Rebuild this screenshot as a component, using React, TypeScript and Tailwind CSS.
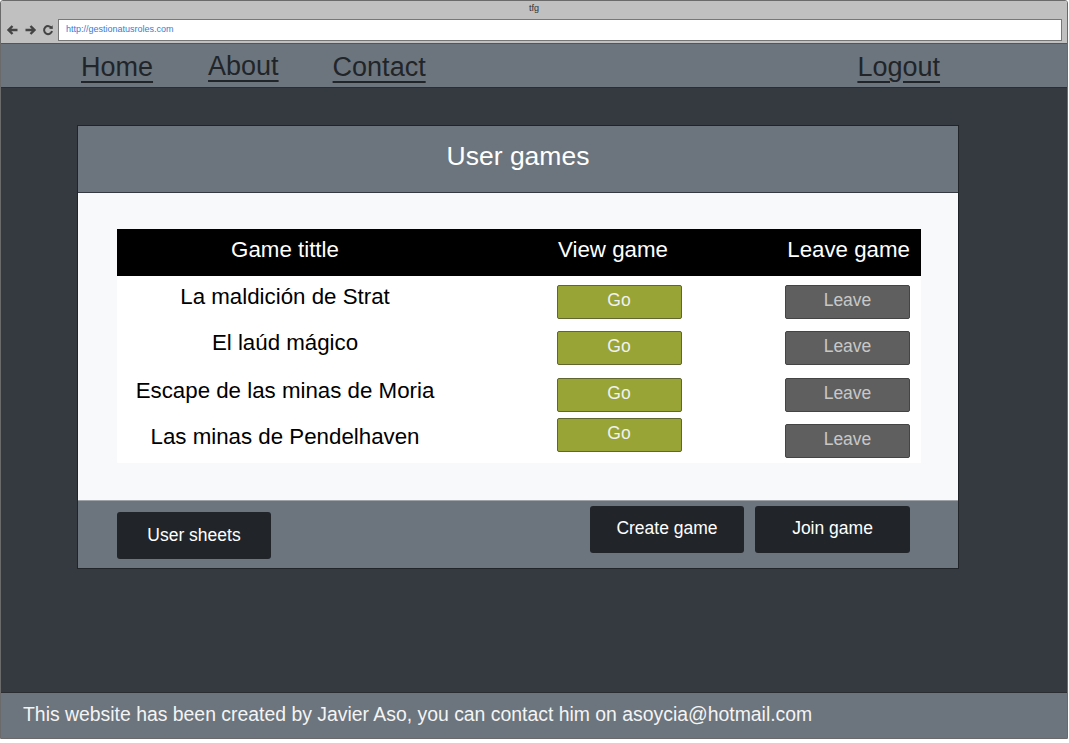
import React from "react";

const font = { fontFamily: '"Liberation Sans", Arial, sans-serif' };

const rows = [
  { name: "La maldición de Strat", h: 46, textTop: 10, goTop: 9, leaveTop: 9 },
  { name: "El laúd mágico", h: 46, textTop: 10, goTop: 9, leaveTop: 9 },
  { name: "Escape de las minas de Moria", h: 46, textTop: 12, goTop: 10, leaveTop: 10 },
  { name: "Las minas de Pendelhaven", h: 49, textTop: 12, goTop: 4, leaveTop: 10 },
];

export default function App() {
  return (
    <div className="w-[1069px] h-[743px] bg-white" style={font}>
      <div className="w-[1068px] h-[739px] border border-[#6a6a6a] flex flex-col overflow-hidden rounded-t-[3px]">
        {/* title bar */}
        <div className="h-[16px] bg-[#c0c0c0] flex items-center justify-center text-[9px] text-[#333]">tfg</div>
        {/* address bar */}
        <div className="h-[27px] bg-[#c0c0c0] flex items-center border-b border-[#555]">
          <div className="flex items-center gap-[5px] pl-[5px] w-[57px]">
            <svg width="13" height="12" viewBox="0 0 13 12">
              <path d="M11.5 6H2.5M6.5 2L2.5 6L6.5 10" stroke="#444" strokeWidth="2.4" fill="none" />
            </svg>
            <svg width="13" height="12" viewBox="0 0 13 12">
              <path d="M1.5 6H10.5M6.5 2L10.5 6L6.5 10" stroke="#444" strokeWidth="2.4" fill="none" />
            </svg>
            <svg width="12" height="12" viewBox="0 0 12 12">
              <path d="M9.6 4.2A4 4 0 1 0 10 7" stroke="#444" strokeWidth="2" fill="none" />
              <path d="M7 4.6L10.8 5L10.6 1.2Z" fill="#444" />
            </svg>
          </div>
          <div className="h-[22px] w-[1004px] bg-white border border-[#777] flex items-center pl-[7px] text-[9px] text-[#3a7bd5]">
            http://gestionatusroles.com
          </div>
        </div>
        {/* nav */}
        <div className="h-[44px] bg-[#6c757d] flex items-center pl-[80px] pr-[127px] pt-[4px] border-b border-[#2a2e33] text-[27px] text-[#212529]">
          <a className="underline underline-offset-[5px] decoration-[2px] leading-none">Home</a>
          <a className="ml-[55px] underline underline-offset-[5px] decoration-[2px] leading-none -mt-[3px]">About</a>
          <a className="ml-[54px] underline underline-offset-[5px] decoration-[2px] leading-none">Contact</a>
          <a className="ml-auto underline underline-offset-[5px] decoration-[2px] leading-none">Logout</a>
        </div>
        {/* main */}
        <div className="flex-1 bg-[#343a40] pt-[37px] pl-[76px]">
          <div className="w-[882px] border border-[#212529] flex flex-col">
            <div className="h-[67px] bg-[#6c757d] border-b border-[#343a40] flex items-center justify-center text-[26.5px] text-white pb-[4px]">
              User games
            </div>
            <div className="bg-[#f8f9fa] pt-[36px] pb-[37px] pl-[39px] pr-[36px]">
              <div className="w-[804px] bg-white">
                <div className="h-[47px] bg-black text-white text-[22.3px] flex items-center pb-[5px]">
                  <div className="w-[336px] text-center">Game tittle</div>
                  <div className="w-[320px] text-center">View game</div>
                  <div className="flex-1 text-right pr-[11px]">Leave game</div>
                </div>
                {rows.map((r) => (
                  <div key={r.name} className="flex" style={{ height: r.h }}>
                    <div className="w-[336px] text-center text-[22.3px] text-black leading-none" style={{ paddingTop: r.textTop }}>
                      {r.name}
                    </div>
                    <div className="w-[320px] flex justify-center pl-[12px]" style={{ paddingTop: r.goTop }}>
                      <button className="w-[125px] h-[34px] bg-[#98a536] border border-[#5f6630] rounded-[2px] text-[17.5px] text-[#f1f1f1] leading-none pb-[2px]">
                        Go
                      </button>
                    </div>
                    <div className="flex-1 flex justify-end pr-[11px]" style={{ paddingTop: r.leaveTop }}>
                      <button className="w-[125px] h-[34px] bg-[#5f5f5f] border border-[#444] rounded-[2px] text-[17.5px] text-[#c8c8c8] leading-none pb-[2px]">
                        Leave
                      </button>
                    </div>
                  </div>
                ))}
              </div>
            </div>
            <div className="h-[68px] bg-[#6c757d] border-t border-[#a0a4a8] flex items-start">
              <button className="mt-[11px] ml-[39px] w-[154px] h-[47px] bg-[#212529] rounded-[3px] text-white text-[17.5px]">
                User sheets
              </button>
              <div className="ml-auto mr-[48px] mt-[5px] flex gap-[11px]">
                <button className="w-[154px] h-[47px] bg-[#212529] rounded-[3px] text-white text-[17.5px] pb-[3px]">
                  Create game
                </button>
                <button className="w-[155px] h-[47px] bg-[#212529] rounded-[3px] text-white text-[17.5px] pb-[3px]">
                  Join game
                </button>
              </div>
            </div>
          </div>
        </div>
        {/* footer */}
        <div className="h-[46px] bg-[#6c757d] border-t border-[#2a2e33] flex items-center pl-[22px] text-[19.4px] text-[#f4f4f4] pb-[2px]">
          This website has been created by Javier Aso, you can contact him on asoycia@hotmail.com
        </div>
      </div>
    </div>
  );
}
